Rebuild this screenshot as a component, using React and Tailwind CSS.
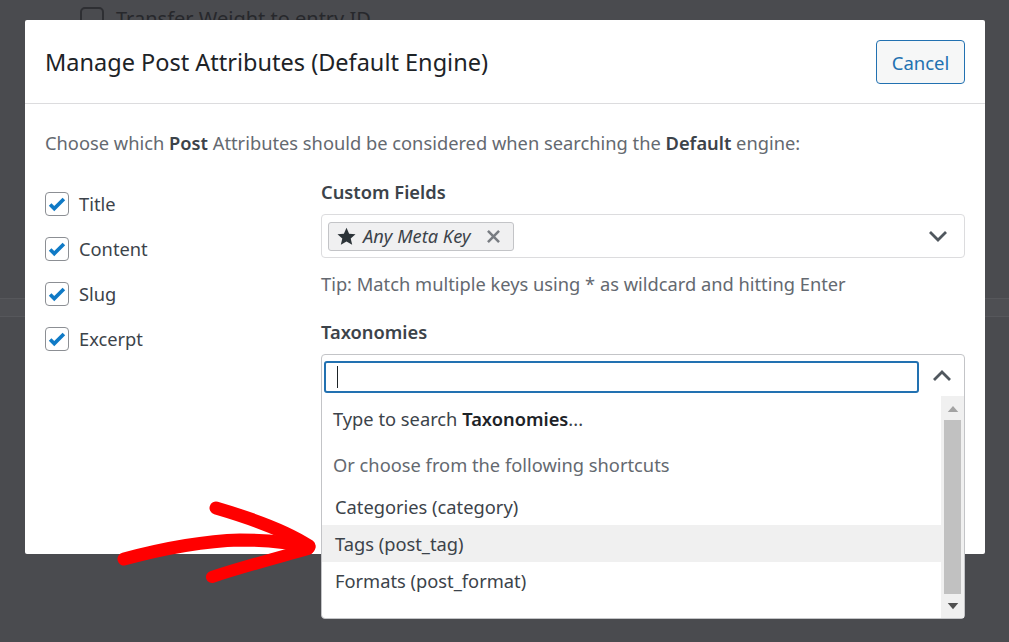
import React from 'react';

const font = { fontFamily: '"Noto Sans", "Open Sans", Arial, sans-serif' };

function Check() {
  return (
    <div className="w-6 h-6 shrink-0 rounded-[4px] border border-[#8c8f94] bg-white flex items-center justify-center">
      <svg viewBox="0 0 24 24" className="w-[22px] h-[22px]">
        <path d="M4.5 12.5l4.5 4.5L19.5 6.5" fill="none" stroke="#0f7ac6" strokeWidth="4" strokeLinecap="butt" strokeLinejoin="miter" />
      </svg>
    </div>
  );
}

function Chevron({ up }) {
  return (
    <svg viewBox="0 0 24 24" className="w-6 h-6">
      <path d={up ? 'M4 16l8-8 8 8' : 'M4 8l8 8 8-8'} fill="none" stroke="#50575e" strokeWidth="2.8" />
    </svg>
  );
}

export default function App() {
  const attrs = ['Title', 'Content', 'Slug', 'Excerpt'];

  return (
    <div className="relative w-full h-[642px] overflow-hidden bg-[#4a4b4f]" style={font}>
      {/* page behind the overlay */}
      <div className="flex items-center gap-3 pl-[80px] pt-[4px] text-[20px] text-[#27282c]">
        <div className="w-6 h-6 rounded-[5px] border-2 border-[#2e2f33]" />
        <span>Transfer Weight to entry ID</span>
      </div>
      <div className="mt-[264px] h-[19px] border-t border-b border-[#56575b] bg-[#4e4f53]" />

      {/* dialog */}
      <div className="absolute left-[25px] top-[20px] w-[960px] h-[534px] bg-white rounded-[2px]">
        <div className="h-[84px] px-5 flex items-center justify-between border-b border-[#dcdcde]">
          <h1 className="text-[23.5px] text-[#1d2327] pt-[3px]">Manage Post Attributes (Default Engine)</h1>
          <button className="w-[89px] h-[44px] rounded-[4px] border border-[#2271b1] bg-[#f6f7f7] text-[#2271b1] text-[18.5px] pt-[2px]">
            Cancel
          </button>
        </div>

        <div className="px-5 pt-[26px] text-[18.3px]">
          <p className="leading-[26px] text-[#646970]">
            Choose which <b className="font-semibold text-[#3c434a]">Post</b> Attributes should be considered when searching the{' '}
            <b className="font-semibold text-[#3c434a]">Default</b> engine:
          </p>

          <div className="flex mt-[24px]">
            <div className="w-[276px] pt-[12px] flex flex-col gap-[21px]">
              {attrs.map(a => (
                <label key={a} className="flex items-center gap-[10px] h-6 text-[#3c434a]">
                  <Check />
                  <span>{a}</span>
                </label>
              ))}
            </div>

            <div className="w-[644px]">
              <h2 className="leading-[24px] font-semibold text-[#3c434a]">Custom Fields</h2>
              <div className="mt-[10px] h-[44px] rounded-[4px] border border-[#dcdcde] flex items-center justify-between pl-[6px] pr-[14px]">
                <div className="h-[29px] pl-[7px] pr-[10px] flex items-center gap-[6px] rounded-[3px] border border-[#c3c4c7] bg-[#f0f0f1] text-[#3c434a]">
                  <svg viewBox="0 0 24 24" className="w-[21px] h-[21px]">
                    <path d="M12 2l3 6.8 7.3.6-5.5 4.8 1.7 7.2L12 17.6l-6.5 3.8 1.7-7.2-5.5-4.8 7.3-.6z" fill="#2c3338" />
                  </svg>
                  <span className="italic">Any Meta Key</span>
                  <svg viewBox="0 0 24 24" className="w-[19px] h-[19px] ml-[8px]">
                    <path d="M5 5l14 14M19 5L5 19" stroke="#787c82" strokeWidth="3.2" />
                  </svg>
                </div>
                <Chevron />
              </div>
              <p className="mt-[13px] leading-[26px] text-[#646970]">
                Tip: Match multiple keys using * as wildcard and hitting Enter
              </p>

              <h2 className="mt-[23px] leading-[24px] font-semibold text-[#3c434a]">Taxonomies</h2>
              <div className="relative mt-[10px] h-[44px]">
                {/* open dropdown */}
                <div className="absolute left-0 top-0 w-[644px] h-[265px] rounded-[4px] border border-[#c3c4c7] bg-white flex flex-col z-10">
                  <div className="h-[41px] flex items-start pt-[6px] pl-[2px]">
                    <div className="w-[595px] h-[32px] rounded-[3px] border-2 border-[#2271b1] flex items-center pl-[11px]">
                      <div className="w-px h-[22px] bg-[#1d2327]" />
                    </div>
                    <div className="flex-1 flex justify-center pt-[3px]">
                      <Chevron up />
                    </div>
                  </div>
                  <div className="flex flex-1">
                    <div className="flex-1">
                      <div className="h-[46px] pl-[11px] flex items-center text-[#3c434a]">
                        <span>Type to search <b className="font-semibold text-[#1d2327]">Taxonomies</b>...</span>
                      </div>
                      <div className="h-[46px] pl-[11px] flex items-center text-[#646970]">
                        Or choose from the following shortcuts
                      </div>
                      <div className="h-[37px] pl-[13px] flex items-center text-[#3c434a]">Categories (category)</div>
                      <div className="h-[37px] pl-[13px] flex items-center text-[#3c434a] bg-[#f0f0f0]">Tags (post_tag)</div>
                      <div className="h-[37px] pl-[13px] flex items-center text-[#3c434a]">Formats (post_format)</div>
                    </div>
                    <div className="w-[23px] bg-[#f0f0f0] flex flex-col items-center">
                      <div className="h-[24px] flex items-center justify-center">
                        <svg viewBox="0 0 12 8" className="w-[12px] h-[7px]"><path d="M0 8L6 1l6 7z" fill="#a3a3a3" /></svg>
                      </div>
                      <div className="w-[17px] flex-1 bg-[#c1c1c1]" />
                      <div className="h-[24px] flex items-center justify-center">
                        <svg viewBox="0 0 12 8" className="w-[12px] h-[7px]"><path d="M0 0L6 7l6-7z" fill="#505050" /></svg>
                      </div>
                    </div>
                  </div>
                </div>
              </div>
            </div>
          </div>
        </div>
      </div>

      {/* red hand-drawn arrow */}
      <svg className="absolute inset-0 w-[1009px] h-[642px] pointer-events-none z-20" viewBox="0 0 1009 642">
        <g fill="none" stroke="#ff0000" strokeLinecap="round" strokeLinejoin="round">
          <path d="M124 559 C165 548 205 541 240 540 C270 540 292 543 309 547" strokeWidth="13" />
          <path d="M216 508 C250 518 285 530 309 546" strokeWidth="13" />
          <path d="M212 577 C245 566 280 557 308 549" strokeWidth="12" />
        </g>
      </svg>
    </div>
  );
}
